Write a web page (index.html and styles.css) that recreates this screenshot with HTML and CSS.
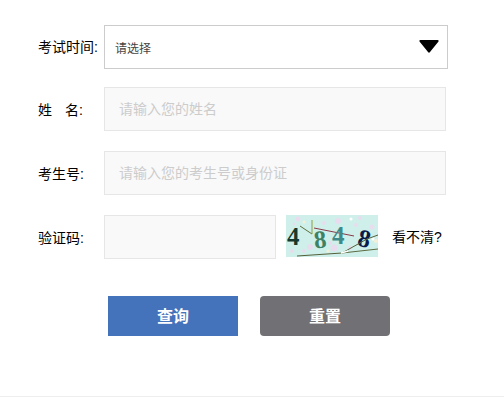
FILE: index.html
```html
<!DOCTYPE html>
<html lang="zh-CN">
<head>
  <meta charset="UTF-8" />
  <title>成绩查询</title>
  <link rel="stylesheet" href="styles.css">
</head>
<body>
  <form class="query-form">
    <div class="row row-first">
      <label class="row-label">考试时间:</label>
      <div class="select-box">
        <span>请选择</span>
        <svg class="select-arrow" width="20" height="13" viewBox="0 0 20 13"><path d="M0.5 1.5 Q0 0 1.5 0 H18.5 Q20 0 19.5 1.5 L11 12 Q10 13.5 9 12 Z" fill="#000"/></svg>
      </div>
    </div>
    <div class="row">
      <label class="row-label">姓<span class="name-gap">名</span>:</label>
      <input class="text-input" type="text" placeholder="请输入您的姓名">
    </div>
    <div class="row">
      <label class="row-label">考生号:</label>
      <input class="text-input" type="text" placeholder="请输入您的考生号或身份证">
    </div>
    <div class="row">
      <label class="row-label">验证码:</label>
      <input class="text-input code-input" type="text">
      <svg class="captcha" width="92" height="42" viewBox="0 0 92 42">
        <rect width="92" height="42" fill="#cff0ea"/>
        <g fill="#e8dcee">
          <circle cx="12" cy="4" r="2.5"/><circle cx="38" cy="8" r="2"/><circle cx="52" cy="6" r="3"/>
          <circle cx="70" cy="10" r="2"/><circle cx="24" cy="32" r="3"/><circle cx="48" cy="33" r="3.5"/>
          <circle cx="18" cy="36" r="2"/><circle cx="74" cy="3" r="2"/><circle cx="86" cy="12" r="2.5"/>
          <circle cx="44" cy="28" r="2"/><circle cx="6" cy="36" r="2"/><circle cx="64" cy="33" r="2"/>
          <circle cx="8" cy="9" r="1.5"/>
        </g>
        <g fill="#f4f0d8">
          <circle cx="18" cy="7" r="1.5"/><circle cx="42" cy="36" r="1.5"/><circle cx="90" cy="26" r="2"/>
        </g>
        <g fill="#fff">
          <circle cx="65" cy="4" r="1.5"/><circle cx="87" cy="24" r="1.5"/><circle cx="36" cy="18" r="1"/>
        </g>
        <path d="M14 11 L26 19" stroke="#5b6e3a" fill="none"/>
        <path d="M26 5 L26 19" stroke="#8aa040" fill="none"/>
        <path d="M28 13 L68 21" stroke="#8a3a4a" fill="none"/>
        <text class="captcha-char" x="1" y="30" fill="#17382c">4</text>
        <text class="captcha-char" x="28" y="33" fill="#3f8163" transform="rotate(-6 34 25)">8</text>
        <text class="captcha-char" x="46" y="29" fill="#3f8a88">4</text>
        <text class="captcha-char" x="72" y="32" fill="#0c1a4a" transform="rotate(12 78 24)">8</text>
        <path d="M11 41 L56 38 L81 24 L92 20" stroke="#55603a" fill="none"/>
        <path d="M56 38 L92 34" stroke="#5c6a42" fill="none"/>
        <path d="M55 38 L62 36" stroke="#fff" stroke-width="1.5" fill="none"/>
      </svg>
      <a class="refresh-link">看不清?</a>
    </div>
    <div class="form-footer">
      <button class="btn btn-query" type="button">查询</button>
      <button class="btn btn-reset" type="button">重置</button>
    </div>
  </form>
  <div class="bottom-line"></div>
</body>
</html>
```

FILE: styles.css
```css
body {
  margin: 0;
  font-family: "Liberation Sans", "Noto Sans CJK SC", sans-serif;
  font-size: 14px;
  color: #000;
  background: #fff;
}

.query-form {
  padding: 25px 0 0 38px;
  height: 371px;
  box-sizing: border-box;
}

.row {
  display: flex;
  align-items: center;
  margin-top: 20px;
}

.row-first {
  margin-top: 0;
  margin-bottom: -2px;
}

.row-label {
  width: 66px;
  flex: none;
}

.row-first .row-label {
  position: relative;
  top: -1px;
}

.name-gap {
  margin-left: 13px;
}

.select-box {
  width: 344px;
  height: 44px;
  box-sizing: border-box;
  border: 1px solid #ccc;
  display: flex;
  align-items: center;
  justify-content: space-between;
  padding: 0 8px 0 10px;
  font-size: 12px;
  color: #444;
}

.select-arrow {
  position: relative;
  top: -1px;
}

.text-input {
  width: 342px;
  height: 44px;
  box-sizing: border-box;
  border: 1px solid #e6e6e6;
  background: #f9f9f9;
  padding: 0 14px;
  font-family: inherit;
  font-size: 14px;
}

.text-input::placeholder {
  color: #ccc;
}

.code-input {
  width: 172px;
}

.captcha {
  margin-left: 10px;
  align-self: flex-start;
}

.captcha-char {
  font-family: "Liberation Serif", serif;
  font-size: 25px;
  font-weight: bold;
}

.refresh-link {
  margin-left: 14px;
  position: relative;
  top: -1px;
}

.form-footer {
  display: flex;
  gap: 22px;
  margin: 37px 0 0 70px;
}

.btn {
  width: 130px;
  height: 40px;
  border: none;
  color: #fff;
  font-family: inherit;
  font-size: 16px;
  font-weight: bold;
  padding: 0 0 2px;
}

.btn-query {
  background: #4472bb;
}

.btn-reset {
  background: #717074;
  border-radius: 4px;
}

.bottom-line {
  margin-top: 25px;
  height: 1px;
  background: #eee;
}
```
